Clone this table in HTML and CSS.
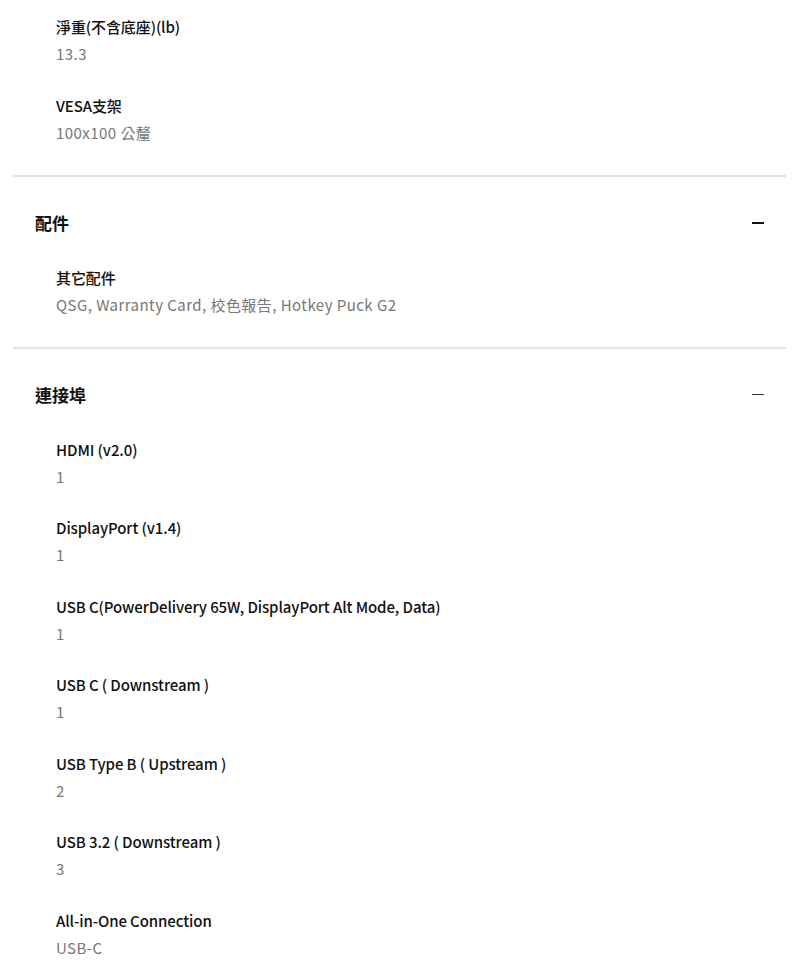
FILE: index.html
```html
<!DOCTYPE html>
<html lang="zh-Hant">
<head>
    <meta charset="UTF-8">
    <meta name="viewport" content="width=device-width, initial-scale=1.0">
    <title>規格</title>
    <link rel="stylesheet" href="styles.css">
</head>
<body>
    <div class="spec-section spec-section-tail">
        <div class="spec-list">
            <div class="spec-item">
                <div class="spec-label">淨重(不含底座)(lb)</div>
                <div class="spec-value">13.3</div>
            </div>
            <div class="spec-item">
                <div class="spec-label">VESA支架</div>
                <div class="spec-value">100x100 公釐</div>
            </div>
        </div>
    </div>

    <div class="spec-section">
        <div class="spec-header">
            <h2 class="spec-title">配件</h2>
            <span class="toggle"></span>
        </div>
        <div class="spec-list">
            <div class="spec-item">
                <div class="spec-label">其它配件</div>
                <div class="spec-value">QSG, Warranty Card, 校色報告, Hotkey Puck G2</div>
            </div>
        </div>
    </div>

    <div class="spec-section">
        <div class="spec-header">
            <h2 class="spec-title">連接埠</h2>
            <span class="toggle thin"></span>
        </div>
        <div class="spec-list">
            <div class="spec-item">
                <div class="spec-label">HDMI (v2.0)</div>
                <div class="spec-value">1</div>
            </div>
            <div class="spec-item">
                <div class="spec-label">DisplayPort (v1.4)</div>
                <div class="spec-value">1</div>
            </div>
            <div class="spec-item">
                <div class="spec-label">USB C(PowerDelivery 65W, DisplayPort Alt Mode, Data)</div>
                <div class="spec-value">1</div>
            </div>
            <div class="spec-item">
                <div class="spec-label">USB C ( Downstream )</div>
                <div class="spec-value">1</div>
            </div>
            <div class="spec-item">
                <div class="spec-label">USB Type B ( Upstream )</div>
                <div class="spec-value">2</div>
            </div>
            <div class="spec-item">
                <div class="spec-label">USB 3.2 ( Downstream )</div>
                <div class="spec-value">3</div>
            </div>
            <div class="spec-item">
                <div class="spec-label">All-in-One Connection</div>
                <div class="spec-value">USB-C</div>
            </div>
        </div>
    </div>
</body>
</html>
```

FILE: styles.css
```css
body {
    margin: 0;
    padding: 0 14px 0 13px;
    font-family: "Noto Sans CJK TC", "Noto Sans", sans-serif;
    color: #111;
    background: #fff;
}
.spec-section {
    padding: 0 22px 31px 22px;
    border-bottom: 2px solid #e3e3e3;
}
.spec-section-tail {
    padding-top: 16px;
}
.spec-header {
    display: flex;
    align-items: center;
    justify-content: space-between;
    padding-top: 34px;
    margin-bottom: 32px;
    height: 24px;
}
.spec-title {
    margin: 0;
    font-size: 17px;
    font-weight: 700;
    line-height: 24px;
}
.toggle {
    display: block;
    width: 12px;
    height: 2px;
    background: #111;
}
.toggle.thin {
    height: 1.5px;
    background: #333;
}
.spec-list {
    display: flex;
    flex-direction: column;
    gap: 29.5px;
    padding-left: 21px;
}
.spec-label {
    font-size: 15px;
    font-weight: 500;
    line-height: 22px;
    letter-spacing: -0.1px;
}
.spec-value {
    margin-top: 5px;
    font-size: 15px;
    line-height: 22px;
    letter-spacing: 0.45px;
    color: #777;
}
```
